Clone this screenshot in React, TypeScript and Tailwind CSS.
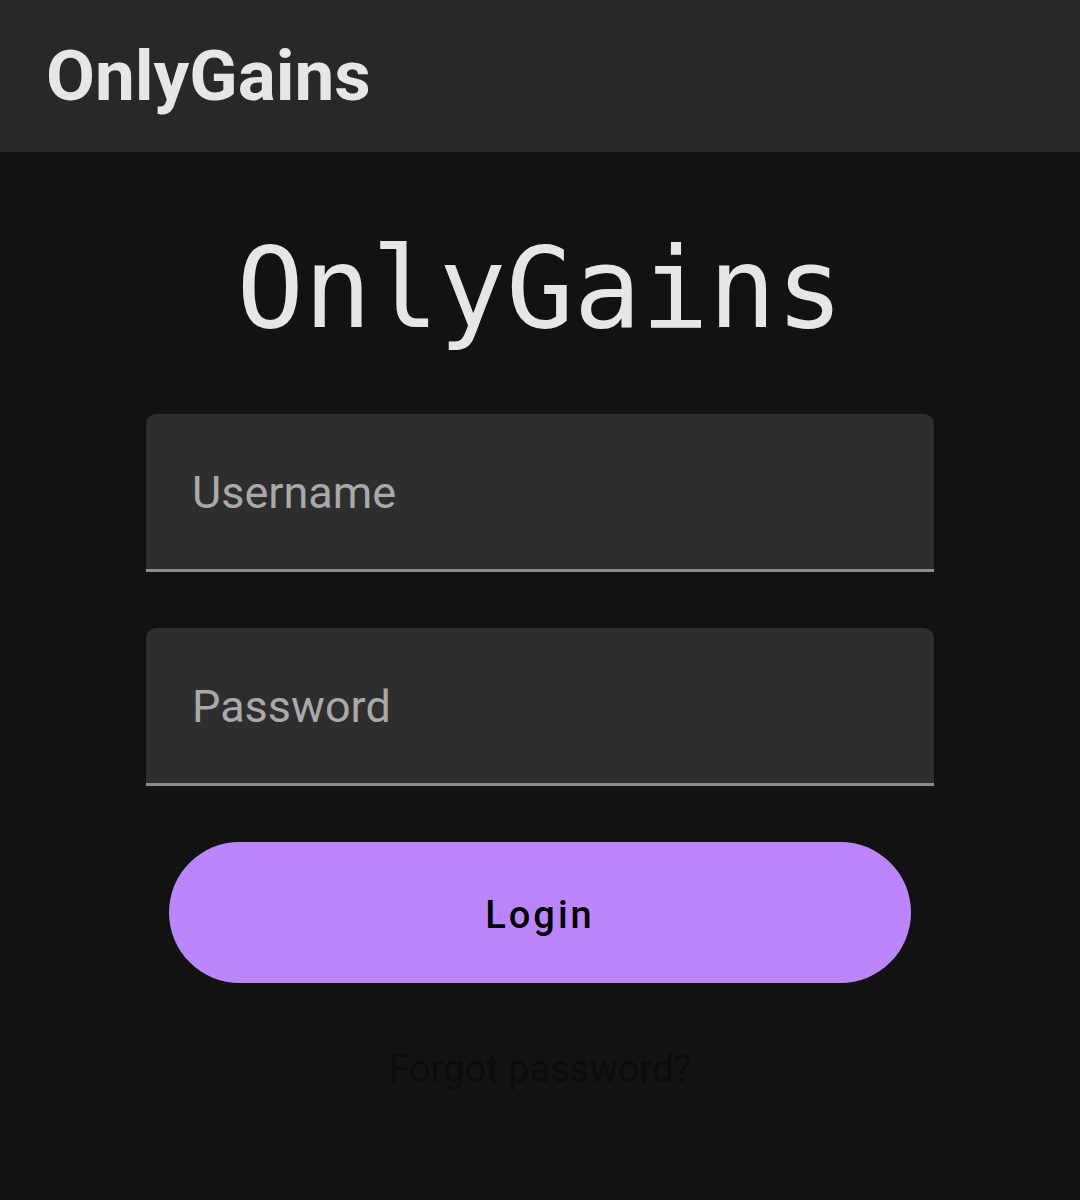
import React from "react";

function Field({ label }: { label: string }) {
  return (
    <div className="h-[158px] w-full rounded-t-[10px] border-b-[3px] border-[#8c8c8c] bg-[#2e2e2e] flex items-center px-[46px]">
      <span className="text-[45px] text-[#a9a9a9] font-['Roboto',sans-serif] pt-[2px]">{label}</span>
    </div>
  );
}

export default function App() {
  return (
    <div className="min-h-[1200px] w-[1080px] bg-[#121212] font-['Roboto',sans-serif]">
      <header className="h-[152px] bg-[#282828] flex items-center px-[46px]">
        <h1 className="text-[71px] font-bold text-[#e6e6e6] leading-none pb-[1px]">OnlyGains</h1>
      </header>
      <main className="flex flex-col items-center">
        <h2 className="mt-[80px] text-[112px] leading-none text-[#e6e6e6] font-['DejaVu_Sans_Mono',monospace]">
          OnlyGains
        </h2>
        <div className="mt-[70px] w-[788px] flex flex-col gap-[56px]">
          <Field label="Username" />
          <Field label="Password" />
        </div>
        <button className="mt-[56px] h-[141px] w-[742px] rounded-full bg-[#bb86fc] pt-[5px] text-[38px] font-medium tracking-[3px] text-black">
          Login
        </button>
        <a href="#" className="mt-[58px] text-[38px] text-[#0b0b0b]">
          Forgot password?
        </a>
      </main>
    </div>
  );
}
